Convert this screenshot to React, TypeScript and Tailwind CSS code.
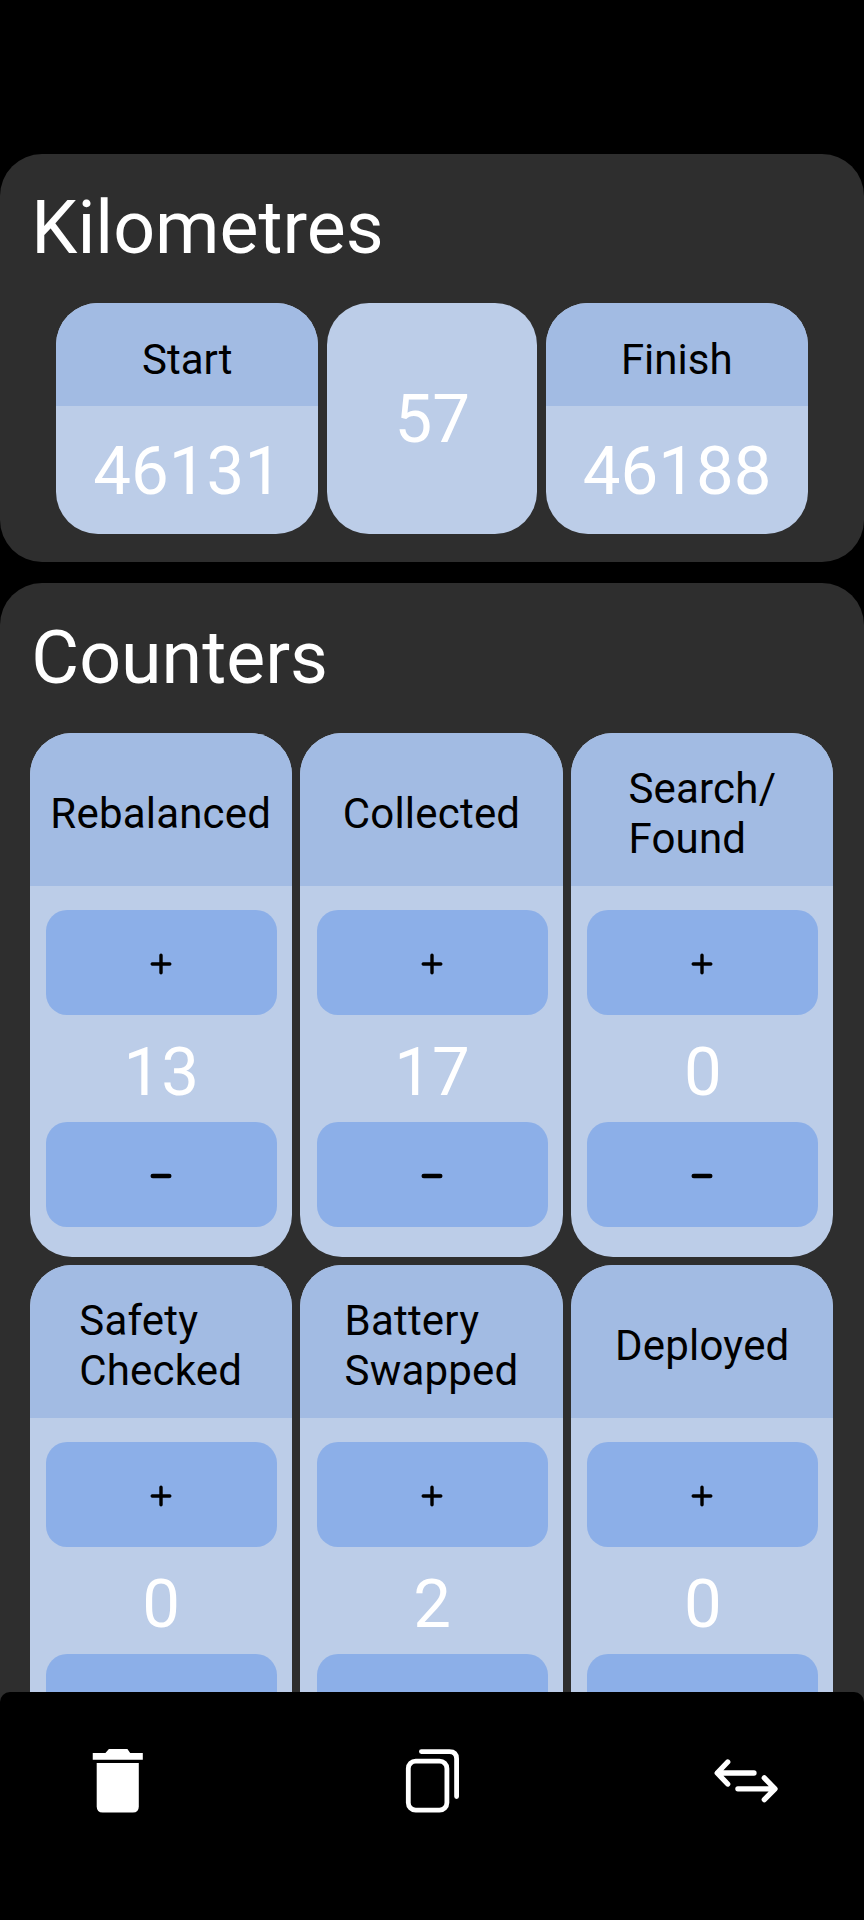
import type { ReactNode } from "react";

type Counter = { label: string[]; value: number };

const counters: Counter[] = [
  { label: ["Rebalanced"], value: 13 },
  { label: ["Collected"], value: 17 },
  { label: ["Search/", "Found"], value: 0 },
  { label: ["Safety", "Checked"], value: 0 },
  { label: ["Battery", "Swapped"], value: 2 },
  { label: ["Deployed"], value: 0 },
];

function SectionTitle({ children }: { children: ReactNode }) {
  return (
    <h1 className="flex h-[149.2px] shrink-0 items-center pl-[31.3px] text-[73.5px] leading-[86px] text-white">
      {children}
    </h1>
  );
}

function Odometer({ label, value }: { label: string; value: string }) {
  return (
    <div className="flex h-[231px] w-[262.3px] flex-col overflow-hidden rounded-[42px] bg-[#bccde8]">
      <div className="flex h-[103.4px] items-center justify-center bg-[#a2bbe3] pt-[10.6px] text-[42px] leading-[50px] text-black">
        {label}
      </div>
      <div className="flex flex-1 items-center justify-center pt-[3px] pl-[1px] text-[67.2px] leading-[79px] text-white">
        {value}
      </div>
    </div>
  );
}

function StepButton({ kind }: { kind: "plus" | "minus" }) {
  return (
    <button className="flex h-[105px] w-[231px] items-center justify-center rounded-[21px] bg-[#8cafe8] pt-[2.4px] pr-[1px]">
      <svg
        className="h-[22px] w-[22px]"
        viewBox="0 0 22 22"
        fill="none"
        stroke="black"
        strokeLinecap="round"
      >
        {kind === "plus" ? (
          <path d="M2.2 11H19.8M11 2.2V19.8" strokeWidth="3.4" />
        ) : (
          <path d="M2.8 11H19.2" strokeWidth="4.6" />
        )}
      </svg>
    </button>
  );
}

function CounterCard({ label, value }: Counter) {
  return (
    <div className="flex h-[524px] w-[262.1px] flex-col items-center overflow-hidden rounded-[42px] bg-[#bccde8]">
      <div className="flex h-[153px] w-full items-center justify-center bg-[#a2bbe3] pt-[9.4px] text-[42px] leading-[50px] tracking-[0.2px] text-black">
        <div>
          {label.map((line) => (
            <div key={line}>{line}</div>
          ))}
        </div>
      </div>
      <div className="flex flex-col items-center pt-[24.5px] pl-[1px]">
        <StepButton kind="plus" />
        <div className="flex h-[107px] items-center pt-[7px] text-[67.2px] leading-[79px] text-white">
          {value}
        </div>
        <StepButton kind="minus" />
      </div>
    </div>
  );
}

function TrashIcon() {
  return (
    <svg className="h-[64px] w-[63px]" viewBox="0 0 63 64" fill="white">
      <path d="M6.75 4H19.4L22.9 0H41.4L44.2 4H56.8V10.7H6.75Z" />
      <path d="M10.7 14H52.8V57.4Q52.8 63.4 46.8 63.4H16.7Q10.7 63.4 10.7 57.4Z" />
    </svg>
  );
}

function CopyIcon() {
  return (
    <svg
      className="h-[64px] w-[63px]"
      viewBox="0 0 63 64"
      fill="none"
      stroke="white"
      strokeWidth="4.8"
      strokeLinecap="round"
    >
      <rect x="8.3" y="12.1" width="38.6" height="49" rx="7.4" />
      <path d="M21.4 2.6H49.4Q56.6 2.6 56.6 9.8V47.6" />
    </svg>
  );
}

function SwapIcon() {
  return (
    <svg
      className="h-[64px] w-[64px]"
      viewBox="0 0 64 64"
      fill="none"
      stroke="white"
      strokeWidth="5.3"
      strokeLinecap="round"
      strokeLinejoin="round"
    >
      <path d="M40 24H3.4M13.7 13L3.2 24L13.7 35" />
      <path d="M23.9 39.8H60.4M50.3 28.9L61 39.8L50.3 50.6" />
    </svg>
  );
}

export default function App() {
  return (
    <div className="flex h-[1920px] w-[864px] flex-col overflow-hidden bg-black font-[Roboto,sans-serif]">
      <main className="relative h-[1692px] shrink-0 pt-[153.5px]">
        <section className="h-[408.8px] rounded-[42px] bg-[#2e2e2e]">
          <SectionTitle>Kilometres</SectionTitle>
          <div className="flex justify-center gap-[8.7px]">
            <Odometer label="Start" value="46131" />
            <div className="flex h-[231px] w-[209.8px] items-center justify-center rounded-[42px] bg-[#bccde8] pt-[3px] pl-[0.4px] text-[67.2px] leading-[79px] text-white">
              57
            </div>
            <Odometer label="Finish" value="46188" />
          </div>
        </section>
        <section className="mt-[20.7px] h-[1240px] rounded-t-[42px] bg-[#2e2e2e]">
          <SectionTitle>Counters</SectionTitle>
          <div className="flex flex-wrap gap-x-[8.7px] gap-y-[8px] pt-[0.5px] pl-[29.7px]">
            {counters.map((counter) => (
              <CounterCard key={counter.label.join(" ")} {...counter} />
            ))}
          </div>
        </section>
      </main>
      <nav className="relative z-10 flex h-[228px] shrink-0 items-start justify-between rounded-t-[10px] bg-black px-[86.2px] pt-[57.3px]">
        <button>
          <TrashIcon />
        </button>
        <button>
          <CopyIcon />
        </button>
        <button>
          <SwapIcon />
        </button>
      </nav>
    </div>
  );
}
